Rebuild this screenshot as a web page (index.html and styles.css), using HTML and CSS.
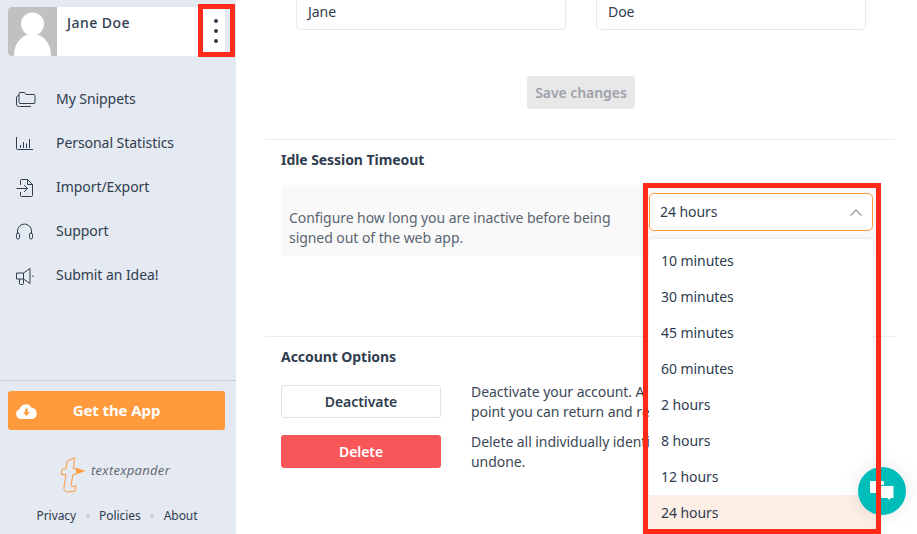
FILE: index.html
```html
<!DOCTYPE html>
<html>

<head>
  <title>Account settings</title>
  <meta charset="UTF-8">
  <link rel="stylesheet" href="styles.css">
</head>

<body>
  <div class="page">
    <aside class="sidebar">
      <div class="profile">
        <div class="avatar">
          <svg width="49" height="49" viewBox="0 0 49 49">
            <rect width="49" height="49" fill="#c1c1c1" />
            <circle cx="24.5" cy="17" r="11.5" fill="#fff" />
            <path d="M6 49c0-13 8-22 18.500-22S43 36 43 49z" fill="#fff" />
          </svg>
        </div>
        <div class="profile-name">Jane Doe</div>
        <div class="kebab"><span></span><span></span><span></span></div>
      </div>

      <nav class="nav">
        <a class="nav-item">
          <svg class="nav-icon" viewBox="0 0 20 20">
            <path d="M3.500 17.500h11.500M3 17.500C1.500 17.500.5 16.500.5 15V9C.5 7.500 1.500 6.500 3 6.500" />
            <path d="M3 13.500V4.500c0-.6.400-1 1-1h4.500l1.500 2h8c.6 0 1 .4 1 1v7c0 .6-.4 1-1 1H4c-.6 0-1-.4-1-1z" />
          </svg>
          My Snippets
        </a>
        <a class="nav-item">
          <svg class="nav-icon" viewBox="0 0 20 20">
            <path d="M.5 4v11.500c0 .6.400 1 1 1H17" />
            <path d="M4.500 12v3M7.500 9v6M10.500 10.500V15M13.500 6v9" />
          </svg>
          Personal Statistics
        </a>
        <a class="nav-item">
          <svg class="nav-icon" viewBox="0 0 20 20">
            <path d="M4.500 8V3.500c0-.6.400-1 1-1h6l5 5v11c0 .6-.4 1-1 1H5.500c-.6 0-1-.4-1-1V15" />
            <path d="M11.500 2.500v5h5M.5 11.500h11M8 8l3.500 3.500L8 15" />
          </svg>
          Import/Export
        </a>
        <a class="nav-item">
          <svg class="nav-icon" viewBox="0 0 20 20">
            <path d="M1.500 13v-3a7 7 0 0 1 14 0v3" />
            <rect x=".5" y="12" width="3" height="6" rx="1.500" />
            <rect x="13.500" y="12" width="3" height="6" rx="1.500" />
          </svg>
          Support
        </a>
        <a class="nav-item">
          <svg class="nav-icon" viewBox="0 0 20 20">
            <path d="M.5 8h7L14 3.500v15L7.500 14h-7z" />
            <path d="M3.500 14v4.500c0 .6.400 1 1 1h2c.6 0 1-.4 1-1V14M7.500 8v6M17 10.500v1.500" />
          </svg>
          Submit an Idea!
        </a>
      </nav>

      <div class="sidebar-foot">
        <a class="get-app">
          <svg class="cloud" viewBox="0 0 21 15">
            <path fill="#fff" d="M5 15a5 5 0 0 1-1.500-9.700A6.500 6.500 0 0 1 15.500 3.700 5.700 5.700 0 0 1 16 15z" />
            <path fill="#ff9a3c" d="M9.300 4.500h2.400v3.500h2.300l-3.500 4-3.500-4h2.300z" />
          </svg>
          Get the App
        </a>
        <div class="logo">
          <svg class="logo-mark" width="31" height="36" viewBox="0 0 31 36">
            <path d="M14.500 1 7 4 6 11.500 2 12.500 1 17.500H6L4 30c-.5 4 2 5 4 5L15 34 16 28.500c-3 1.500-5 1.500-5 0L13 17.500H16L16.500 11.500H13.500z" />
            <path class="logo-arrow" d="M17 11 25.500 14 17 17z" />
          </svg>
          <span class="logo-text">textexpander</span>
        </div>
        <div class="foot-links">
          <a>Privacy</a>
          <i></i>
          <a>Policies</a>
          <i></i>
          <a>About</a>
        </div>
      </div>
    </aside>

    <main class="main">
      <div class="name-row">
        <div class="input">Jane</div>
        <div class="input">Doe</div>
      </div>
      <div class="save-row">
        <button class="btn-save">Save changes</button>
      </div>

      <section class="section section-idle">
        <h3>Idle Session Timeout</h3>
        <div class="idle-box">
          <p>Configure how long you are inactive before being signed out of the web app.</p>
          <div class="select-wrap">
            <div class="select">
              24 hours
              <svg width="12" height="7" viewBox="0 0 12 7">
                <path d="M.5 6.500 6 1l5.500 5.500" fill="none" stroke="#8b95a1" stroke-width="1.200" />
              </svg>
            </div>
            <ul class="menu">
              <li>10 minutes</li>
              <li>30 minutes</li>
              <li>45 minutes</li>
              <li>60 minutes</li>
              <li>2 hours</li>
              <li>8 hours</li>
              <li>12 hours</li>
              <li class="current">24 hours</li>
            </ul>
          </div>
        </div>
      </section>

      <section class="section">
        <h3>Account Options</h3>
        <div class="option-row">
          <button class="btn btn-plain">Deactivate</button>
          <p>Deactivate your account. A<br>point you can return and re</p>
        </div>
        <div class="option-row">
          <button class="btn btn-danger">Delete</button>
          <p>Delete all individually identi<br>undone.</p>
        </div>
      </section>
    </main>
  </div>

  <div class="chat">
    <svg width="24" height="21" viewBox="0 0 24 21">
      <path fill="#fff" d="M1 0h12c.6 0 1 .4 1 1v10c0 .6-.4 1-1 1H9l-2 3-1-3H1c-.6 0-1-.4-1-1V1c0-.6.400-1 1-1z" />
      <path fill="#fff" stroke="#00bdb9" d="M11 4.500h12c.6 0 1 .4 1 1v11c0 .6-.4 1-1 1h-2.500v3l-3-3H11c-.6 0-1-.4-1-1v-11c0-.6.400-1 1-1z" />
    </svg>
  </div>

  <div class="mark mark-kebab"></div>
  <div class="mark mark-select"></div>
</body>

</html>
```

FILE: styles.css
```css
* {
  padding: 0;
  margin: 0;
  box-sizing: border-box;
}

html,
body {
  height: 534px;
  overflow: hidden;
}

body {
  font-family: "Noto Sans", "Open Sans", sans-serif;
  font-size: 14px;
  line-height: 20px;
  letter-spacing: -0.06px;
  color: #2f3d4f;
  background-color: #fff;
}

.page {
  display: flex;
  height: 534px;
}

/* sidebar */
.sidebar {
  width: 236px;
  flex-shrink: 0;
  display: flex;
  flex-direction: column;
  padding-top: 7px;
  background-color: #e5e9f1;
}

.profile {
  display: flex;
  width: 217px;
  height: 49px;
  margin-left: 8px;
  background-color: #fff;
  border-radius: 4px;
  overflow: hidden;
}

.avatar {
  width: 49px;
  height: 49px;
}

.profile-name {
  flex: 1;
  padding: 6px 0 0 10px;
  font-weight: 500;
  letter-spacing: 0.45px;
}

.kebab {
  display: flex;
  flex-direction: column;
  align-items: center;
  justify-content: center;
  gap: 6px;
  width: 18px;
  padding-bottom: 1px;
}

.kebab span {
  width: 4px;
  height: 4px;
  border-radius: 50%;
  background-color: #2f3d4f;
}

.nav {
  display: flex;
  flex-direction: column;
  margin-top: 21px;
}

.nav-item {
  display: flex;
  align-items: center;
  gap: 20px;
  height: 44px;
  padding-left: 16px;
}

.nav-icon {
  width: 20px;
  height: 20px;
  fill: none;
  stroke: #2f3d4f;
  stroke-width: 1;
}

.sidebar-foot {
  margin-top: auto;
  height: 154px;
  padding-top: 10px;
  border-top: 1px solid #c8ccd8;
}

.get-app {
  position: relative;
  display: block;
  width: 217px;
  height: 39px;
  margin-left: 8px;
  border-radius: 3px;
  background-color: #ff9a3c;
  color: #fff;
  font-size: 15px;
  font-weight: 700;
  line-height: 39px;
  letter-spacing: -0.1px;
  text-align: center;
}

.cloud {
  position: absolute;
  left: 8px;
  top: 13px;
  width: 21px;
  height: 15px;
}

.logo {
  display: flex;
  align-items: flex-start;
  margin: 27px 0 0 60px;
  height: 36px;
}

.logo-mark {
  flex-shrink: 0;
  fill: none;
  stroke: #ff9a3c;
  stroke-width: 1;
}

.logo-text {
  margin-top: 3px;
  font-family: "Open Sans", sans-serif;
  font-size: 13px;
  font-style: italic;
  letter-spacing: 0.3px;
  color: #5d6670;
}

.logo-arrow {
  fill: #ff9a3c;
  stroke: none;
}

.foot-links {
  display: flex;
  align-items: center;
  justify-content: center;
  gap: 9.5px;
  margin-top: 13px;
  padding-right: 2px;
  font-size: 12px;
}

.foot-links i {
  width: 4px;
  height: 4px;
  border-radius: 50%;
  background-color: #c5ccd5;
}

/* main column */
.main {
  flex: 1;
  padding: 0 22px 0 29px;
}

.name-row {
  display: flex;
  gap: 30px;
  margin-top: -8px;
  padding-left: 31px;
}

.input {
  width: 270px;
  height: 38px;
  padding: 9px 11px;
  border: 1px solid #e5e9f1;
  border-radius: 5px;
}

.save-row {
  display: flex;
  justify-content: center;
  margin-top: 46px;
  padding-left: 2px;
}

.btn-save {
  width: 108px;
  height: 33px;
  border: 0;
  border-radius: 3px;
  background-color: #e8e8e8;
  color: #9da3aa;
  font: 600 14px "Noto Sans", sans-serif;
  letter-spacing: -0.06px;
}

.section {
  padding: 10px 0 0 16px;
  border-top: 1px solid #e8ecf0;
}

.section h3 {
  font-size: 14px;
  font-weight: 700;
  margin-bottom: 15px;
}

.save-row + .section {
  margin-top: 30px;
}

.section-idle {
  height: 197px;
}

.idle-box {
  display: grid;
  grid-template-columns: 360px 224px;
  width: 600px;
  height: 71px;
  padding: 8px;
  background-color: #f9f9f9;
}

.idle-box p {
  align-self: end;
  color: #5a6572;
}

.select-wrap {
  position: relative;
}

.select {
  display: flex;
  align-items: center;
  justify-content: space-between;
  height: 38px;
  padding: 0 10px;
  background-color: #fff;
  border: 1px solid #ff9a3c;
  border-radius: 5px;
}

.menu {
  position: absolute;
  left: 0;
  top: 46px;
  width: 224px;
  height: 300px;
  padding-top: 4px;
  list-style: none;
  background-color: #fff;
  border-radius: 4px;
  box-shadow: 0 0 4px rgba(0, 0, 0, 0.1);
}

.menu li {
  height: 36px;
  padding: 8px 12px;
}

.menu .current {
  margin-right: -3px;
  background-color: #fdeee6;
}

.option-row {
  display: flex;
  gap: 30px;
  height: 40px;
  margin-bottom: 10px;
}

.option-row p {
  white-space: nowrap;
  color: #3c4858;
}

.btn {
  width: 160px;
  height: 33px;
  margin-top: 3px;
  border-radius: 3px;
  font: 600 14px "Noto Sans", sans-serif;
  letter-spacing: -0.06px;
}

.btn-plain {
  background-color: #fff;
  border: 1px solid #dfe2e8;
  color: #2f3d4f;
}

.btn-danger {
  background-color: #f9565a;
  border: 0;
  color: #fff;
}

/* floating bits */
.chat {
  position: absolute;
  left: 858px;
  top: 467px;
  display: flex;
  align-items: center;
  justify-content: center;
  width: 48px;
  height: 48px;
  border-radius: 50%;
  background-color: #00bdb9;
  box-shadow: 0 0 20px rgba(0, 0, 0, 0.1);
}

.mark {
  position: absolute;
  border: 5px solid #ff2a1a;
}

.mark-kebab {
  left: 198px;
  top: 4px;
  width: 37px;
  height: 53px;
}

.mark-select {
  left: 643px;
  top: 183px;
  width: 238px;
  height: 351px;
}
```
